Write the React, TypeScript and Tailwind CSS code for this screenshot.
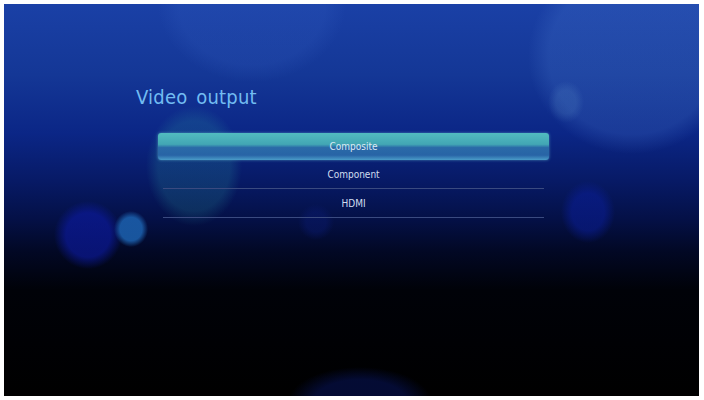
const options = ["Composite", "Component", "HDMI"];

const font = { fontFamily: '"DejaVu Sans Condensed", "DejaVu Sans", sans-serif' };

export default function App() {
  const selected = 0;

  return (
    <div className="w-[704px] h-[400px] bg-white pt-[4px] pl-[4px] pr-[5px] pb-[4px]">
      {/* screen: dark blue fade with soft bokeh spots */}
      <div className="w-full h-full overflow-hidden bg-[radial-gradient(17px_18px_at_127px_225px,rgba(28,98,176,0.85)_0,rgba(28,98,176,0.85)_65%,transparent_100%),radial-gradient(34px_34px_at_84px_231px,rgba(12,26,160,0.65)_0,rgba(12,26,160,0.65)_65%,transparent_100%),radial-gradient(27px_31px_at_584px_208px,rgba(10,30,154,0.55)_0,rgba(10,30,154,0.55)_60%,transparent_100%),radial-gradient(18px_18px_at_312px_218px,rgba(10,26,112,0.45)_0,rgba(10,26,112,0.45)_55%,transparent_100%),radial-gradient(72px_36px_at_356px_399px,rgba(10,28,128,0.4)_0,rgba(10,28,128,0.4)_65%,transparent_100%),radial-gradient(48px_60px_at_190px_162px,rgba(42,150,160,0.22)_0,rgba(42,150,160,0.22)_75%,transparent_100%),radial-gradient(18px_21px_at_562px_98px,rgba(90,142,200,0.22)_0,rgba(90,142,200,0.22)_55%,transparent_100%),radial-gradient(104px_98px_at_628px_52px,rgba(74,122,208,0.24)_0,rgba(74,122,208,0.24)_80%,transparent_100%),radial-gradient(94px_78px_at_248px_0px,rgba(58,102,200,0.18)_0,rgba(58,102,200,0.18)_78%,transparent_100%),linear-gradient(180deg,#1a40a6_0%,#143796_18%,#0b2686_33%,#071a66_45%,#041046_55%,#020825_63%,#000208_73%,#000000_100%)]">
        <div className="flex flex-col pt-[78px]">
          <h1
            className="pl-[132px] text-[20px] leading-[30px] text-[#72bcf2] tracking-[0.2px]"
            style={{ ...font, wordSpacing: "3px" }}
          >
            Video output
          </h1>

          <ul className="mt-[21px] ml-[154px] w-[391px] flex flex-col">
            {options.map((opt, i) =>
              i === selected ? (
                <li
                  key={opt}
                  className="h-[27px] rounded-[3px] flex items-center justify-center text-[10px] text-[#dbeaf5] bg-[linear-gradient(180deg,#52bcc0_0%,#42a6b4_42%,#2a6aa8_54%,#2864a6_82%,#4a9cc8_100%)] shadow-[0_0_3px_rgba(110,200,220,0.6)]"
                  style={font}
                >
                  {opt}
                </li>
              ) : (
                <li
                  key={opt}
                  className="mx-[5px] h-[29px] pt-[1px] border-b border-[#3a4a80] flex items-center justify-center text-[10px] text-[#d2def0]"
                  style={font}
                >
                  {opt}
                </li>
              )
            )}
          </ul>
        </div>
      </div>
    </div>
  );
}
